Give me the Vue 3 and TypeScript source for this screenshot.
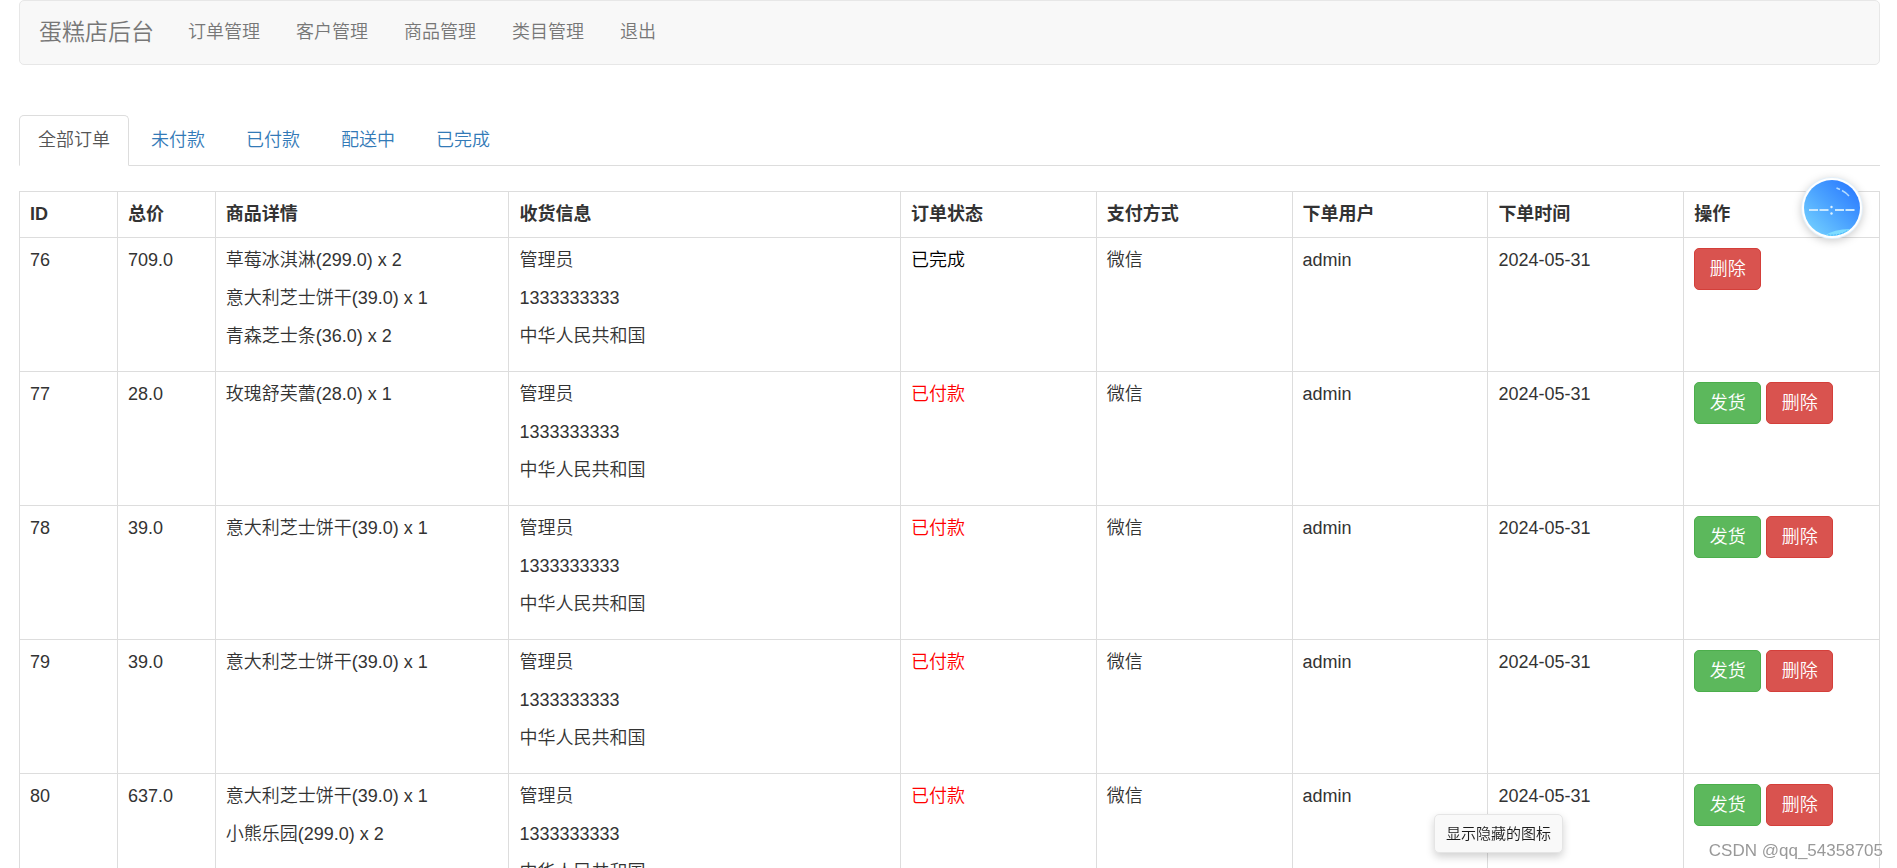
<script setup lang="ts">
import { ref } from 'vue'

interface Order {
  id: number
  total: string
  items: string[]
  done: boolean
}

const navLinks: string[] = ['订单管理', '客户管理', '商品管理', '类目管理', '退出']
const tabs: string[] = ['全部订单', '未付款', '已付款', '配送中', '已完成']
const headings: string[] = ['ID', '总价', '商品详情', '收货信息', '订单状态', '支付方式', '下单用户', '下单时间', '操作']
const activeTab = ref(0)
const receiver: string[] = ['管理员', '1333333333', '中华人民共和国']

const orders = ref<Order[]>([
  { id: 76, total: '709.0', items: ['草莓冰淇淋(299.0) x 2', '意大利芝士饼干(39.0) x 1', '青森芝士条(36.0) x 2'], done: true },
  { id: 77, total: '28.0', items: ['玫瑰舒芙蕾(28.0) x 1'], done: false },
  { id: 78, total: '39.0', items: ['意大利芝士饼干(39.0) x 1'], done: false },
  { id: 79, total: '39.0', items: ['意大利芝士饼干(39.0) x 1'], done: false },
  { id: 80, total: '637.0', items: ['意大利芝士饼干(39.0) x 1', '小熊乐园(299.0) x 2'], done: false },
])
</script>

<template>
  <div class="page">
    <nav class="navbar">
      <a class="brand" href="#">蛋糕店后台</a>
      <ul class="nav">
        <li v-for="link in navLinks" :key="link"><a href="#">{{ link }}</a></li>
      </ul>
    </nav>

    <ul class="tabs">
      <li v-for="(tab, i) in tabs" :key="tab">
        <a href="#" :class="{ active: i === activeTab }" @click.prevent="activeTab = i">{{ tab }}</a>
      </li>
    </ul>

    <table class="orders">
      <colgroup>
        <col class="narrow"><col class="narrow"><col class="goods"><col class="address">
        <col v-for="n in 5" :key="n" class="normal">
      </colgroup>
      <thead>
        <tr><th v-for="h in headings" :key="h" scope="col">{{ h }}</th></tr>
      </thead>
      <tbody>
        <tr v-for="order in orders" :key="order.id">
          <td>{{ order.id }}</td>
          <td>{{ order.total }}</td>
          <td><p v-for="item in order.items" :key="item">{{ item }}</p></td>
          <td><p v-for="line in receiver" :key="line">{{ line }}</p></td>
          <td><span :class="order.done ? 'done' : 'paid'">{{ order.done ? '已完成' : '已付款' }}</span></td>
          <td>微信</td>
          <td>admin</td>
          <td>2024-05-31</td>
          <td>
            <div class="actions">
              <button v-if="!order.done" type="button" class="btn ship">发货</button>
              <button type="button" class="btn remove">删除</button>
            </div>
          </td>
        </tr>
      </tbody>
    </table>

    <div class="orb">
      <svg viewBox="0 0 64 64" width="64" height="64" aria-hidden="true">
        <defs>
          <linearGradient id="orbFill" x1="0.15" y1="0.85" x2="0.85" y2="0.15">
            <stop offset="0" stop-color="#6cc8ff" />
            <stop offset="0.5" stop-color="#4ba3ff" />
            <stop offset="1" stop-color="#2f80ff" />
          </linearGradient>
          <clipPath id="orbClip"><circle cx="32" cy="32" r="28" /></clipPath>
        </defs>
        <circle cx="32" cy="32" r="31" fill="#e3f0fa" />
        <circle cx="32" cy="32" r="30" fill="#fff" />
        <circle cx="32" cy="32" r="28" fill="url(#orbFill)" />
        <g clip-path="url(#orbClip)">
          <path d="M24 60 Q34 53 50 53 L48 62 H24Z" fill="#7fdcff" />
          <path d="M28 59 Q40 60 48 54" fill="none" stroke="#46b4fa" stroke-width="1" stroke-dasharray="2 1" />
        </g>
        <path d="M36.500 12 L40 13.500 M42 14.500 Q46 16.500 49 20" fill="none" stroke="#b5dcff" stroke-width="1.500" />
        <path d="M9 34H18M19.500 34H28.500M35 34H44M45.500 34H54.500" stroke="#c9e8ff" stroke-width="2" />
        <circle cx="31.500" cy="31" r="1.200" fill="#dff2ff" />
        <circle cx="31.500" cy="37.500" r="1.200" fill="#dff2ff" />
      </svg>
    </div>
    <div class="tooltip" role="tooltip">显示隐藏的图标</div>
    <div class="watermark">CSDN @qq_54358705</div>
  </div>
</template>

<style>
html {
  scrollbar-width: none;
}
body {
  margin: 0;
  background: #fff;
}
</style>

<style scoped>
* {
  box-sizing: border-box;
}
.page {
  padding: 0 17px 0 19px;
  color: #333;
  font-family: "Liberation Sans", "Noto Sans CJK SC", sans-serif;
  font-size: 18px;
  font-weight: 350;
  line-height: 25px;
}
a {
  text-decoration: none;
}
ul {
  margin: 0;
  padding: 0;
  list-style: none;
}
.navbar {
  display: flex;
  align-items: center;
  height: 65px;
  margin-bottom: 50px;
  border: 1px solid #e7e7e7;
  border-radius: 5px;
  background: #f8f8f8;
}
.navbar a {
  color: #777;
}
.brand {
  padding: 0 16px 0 19px;
  font-size: 23px;
}
.nav {
  display: flex;
}
.nav a {
  display: block;
  padding: 18px;
}
.tabs {
  display: flex;
  gap: 3px;
  margin-bottom: 25px;
  border-bottom: 1px solid #ddd;
}
.tabs a {
  display: block;
  margin-bottom: -1px;
  padding: 12px 18px;
  border: 1px solid transparent;
  border-radius: 5px 5px 0 0;
  color: #337ab7;
}
.tabs .active {
  border-color: #ddd #ddd #fff;
  background: #fff;
  color: #555;
}
.orders {
  width: 100%;
  table-layout: fixed;
  border-collapse: collapse;
}
.narrow {
  width: 5%;
}
.goods {
  width: 15%;
}
.address {
  width: 20%;
}
.normal {
  width: 10%;
}
th,
td {
  padding: 10px;
  border: 1px solid #ddd;
  text-align: left;
  vertical-align: top;
}
td p {
  margin: 0 0 13px;
}
td {
  padding-bottom: 9px;
}
.done {
  color: #000;
}
.paid {
  color: #f00;
}
.actions {
  display: flex;
  gap: 5px;
}
.btn {
  min-width: 67px;
  height: 42px;
  padding: 0 14px;
  border: 1px solid;
  border-radius: 5px;
  color: #fff;
  font: inherit;
  cursor: pointer;
}
.ship {
  border-color: #4cae4c;
  background: #5cb85c;
}
.remove {
  border-color: #d43f3a;
  background: #d9534f;
}
.orb {
  position: fixed;
  top: 176px;
  right: 33px;
  width: 64px;
  height: 64px;
  border-radius: 50%;
  filter: drop-shadow(0 2px 4px rgba(0, 0, 0, 0.2));
}
.orb svg {
  display: block;
}
.tooltip {
  position: fixed;
  right: 334px;
  bottom: 15px;
  padding: 6px 11px;
  border: 1px solid #e5e5e5;
  border-radius: 5px;
  background: #f9f9f9;
  box-shadow: 0 4px 8px rgba(0, 0, 0, 0.18);
  color: #1b1b1b;
  font-size: 15px;
}
.watermark {
  position: fixed;
  right: 14px;
  bottom: 5px;
  color: #999;
  font-size: 17px;
  text-shadow: 1px 1px 1px #fff;
}
</style>
